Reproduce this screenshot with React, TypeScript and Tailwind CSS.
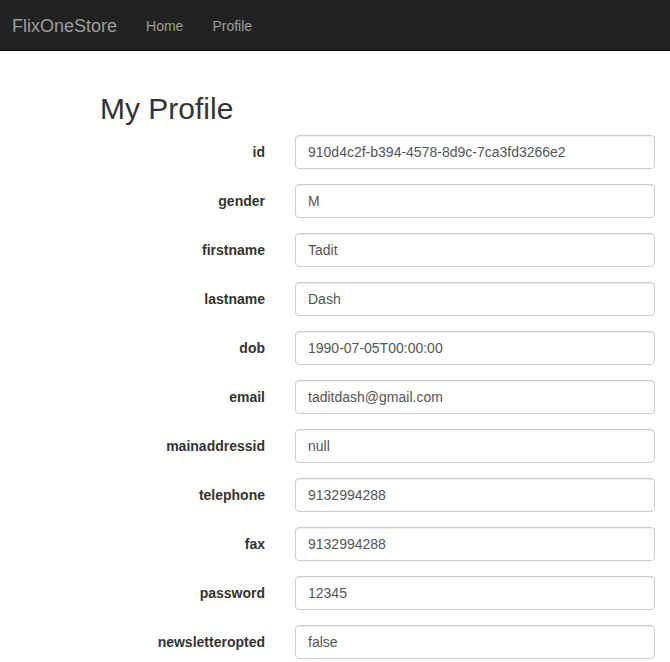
const fields: [string, string][] = [
  ["id", "910d4c2f-b394-4578-8d9c-7ca3fd3266e2"],
  ["gender", "M"],
  ["firstname", "Tadit"],
  ["lastname", "Dash"],
  ["dob", "1990-07-05T00:00:00"],
  ["email", "taditdash@gmail.com"],
  ["mainaddressid", "null"],
  ["telephone", "9132994288"],
  ["fax", "9132994288"],
  ["password", "12345"],
  ["newsletteropted", "false"],
];

export default function App() {
  return (
    <div className="min-h-screen bg-white text-[#333] text-[14px] font-['Liberation_Sans',Arial,sans-serif]">
      <nav className="h-[51px] bg-[#222] border-b border-[#080808] flex items-center pt-[2px]">
        <span className="ml-[12px] text-[18px] text-[#9d9d9d]">FlixOneStore</span>
        <a className="ml-[29px] text-[#9d9d9d]">Home</a>
        <a className="ml-[29px] text-[#9d9d9d]">Profile</a>
      </nav>

      <div className="pl-[100px] pt-[41px]">
        <h2 className="text-[30px] leading-[33px] mb-[10px] font-normal">My Profile</h2>
      </div>

      <form className="flex flex-col gap-[15px]">
        {fields.map(([label, value]) => (
          <div key={label} className="flex items-center">
            <label className="w-[265px] text-right font-bold">{label}</label>
            <div className="ml-[30px] w-[360px]">
              <input
                readOnly
                value={value}
                className="w-full h-[34px] px-[12px] border border-[#ccc] rounded-[4px] text-[#555] shadow-[inset_0_1px_1px_rgba(0,0,0,0.075)] outline-none"
              />
            </div>
          </div>
        ))}
      </form>
    </div>
  );
}
